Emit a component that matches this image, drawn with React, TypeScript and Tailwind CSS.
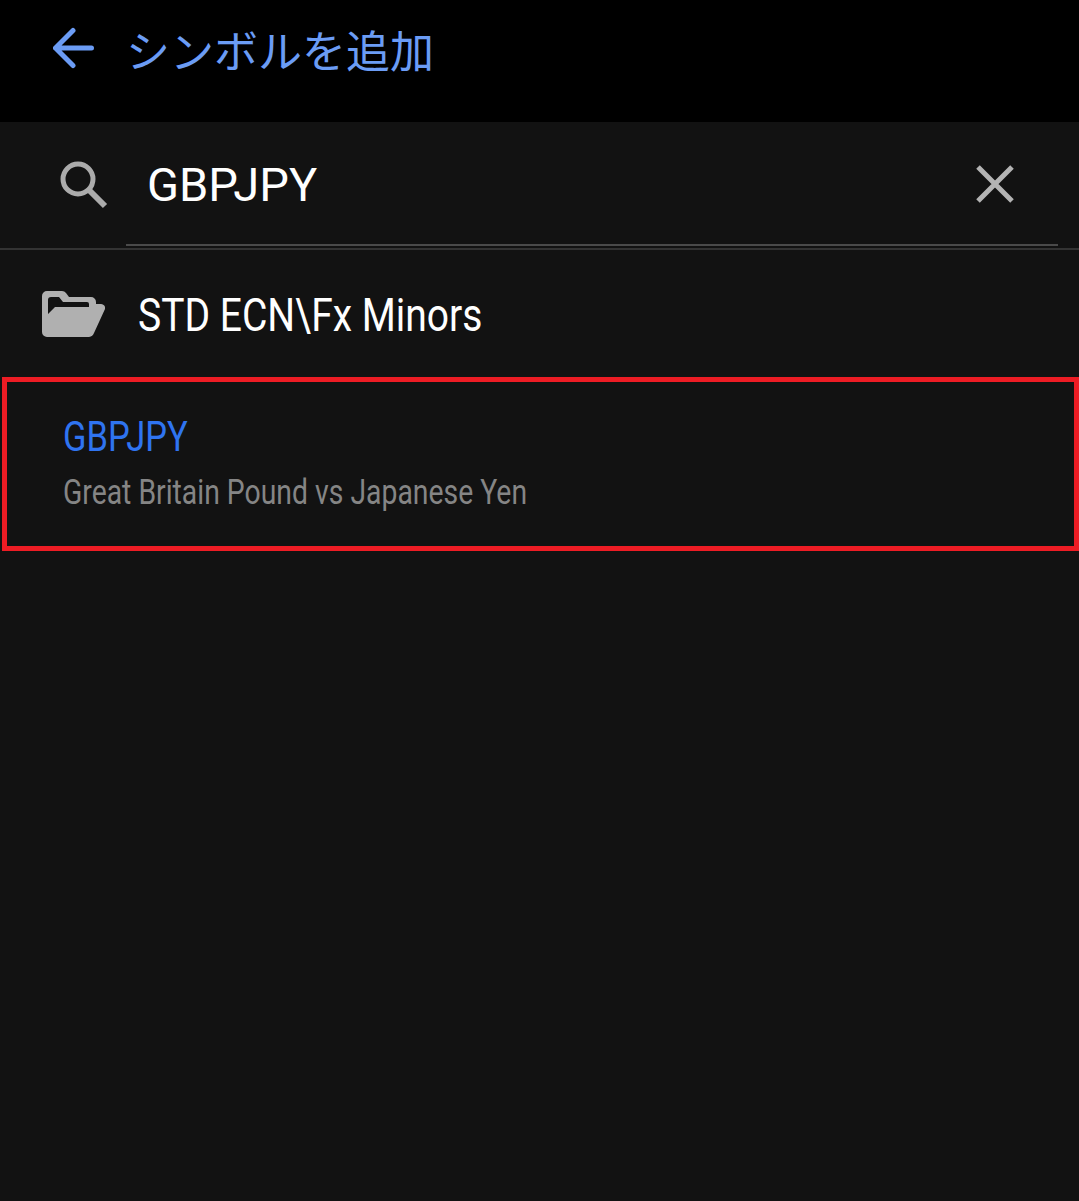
export default function App() {
  return (
    <div className="w-[1079px] h-[1201px] bg-[#121212] overflow-hidden font-['Roboto',sans-serif]">
      {/* Header */}
      <header className="h-[122px] bg-black flex items-start pl-[53px] pt-[24px]">
        <svg width="41" height="48" viewBox="0 0 41 48" className="text-[#6b9cf5] shrink-0">
          <path d="M2.500 24h36M20 6.500L2.500 24 20 41.500" fill="none" stroke="currentColor" strokeWidth="5" strokeLinecap="round" strokeLinejoin="round" />
        </svg>
        <h1 className="ml-[32px] -mt-[2px] text-[44px] leading-[54px] text-[#6b9cf5] font-['Noto_Sans_CJK_JP',sans-serif] font-normal whitespace-nowrap">
          シンボルを追加
        </h1>
      </header>

      {/* Search */}
      <div className="h-[128px] border-b-2 border-[#333] flex items-start">
        <svg width="48" height="48" viewBox="0 0 48 48" className="ml-[60px] mt-[39px] shrink-0">
          <circle cx="18" cy="18" r="15" fill="none" stroke="#ababab" strokeWidth="5" />
          <path d="M29 29l16 16" stroke="#ababab" strokeWidth="6" />
        </svg>
        <div className="ml-[18px] w-[932px] h-[124px] border-b-2 border-[#4a4a4a] flex items-start justify-between">
          <span className="ml-[21px] mt-[35px] text-[47px] leading-[56px] text-white">GBPJPY</span>
          <svg width="40" height="40" viewBox="0 0 40 40" className="mr-[43px] mt-[42px]">
            <path d="M3 3l34 34M37 3L3 37" stroke="#b4b4b4" strokeWidth="5" />
          </svg>
        </div>
      </div>

      {/* Folder */}
      <div className="h-[127px] flex items-center pl-[42px]">
        <svg width="63" height="46" viewBox="0 0 63 46" className="shrink-0 mt-[1px]">
          <path
            fillRule="evenodd"
            fill="#b0b0b0"
            d="M5 0H20a5 5 0 0 1 4 2L27 6H49a5 5 0 0 1 5 5V13H59a4 4 0 0 1 4 5L52 42a6 6 0 0 1-5 4H5a5 5 0 0 1-5-5V5a5 5 0 0 1 5-5zM9 6a3 3 0 0 0-3 3V23L13 16H47V13a2 2 0 0 0-2-2H21L17 6z"
          />
        </svg>
        <span className="ml-[33px] mt-[2px] text-[47px] leading-[54px] text-white scale-x-[0.83] origin-left whitespace-nowrap">
          {"STD ECN\\Fx Minors"}
        </span>
      </div>

      {/* Highlighted symbol */}
      <div className="ml-[2px] w-[1077px] h-[174px] border-[5px] border-[#ed1c24] pl-[56px] pt-[30px]">
        <div className="text-[42px] leading-[50px] text-[#2f74f0] scale-x-[0.82] origin-left whitespace-nowrap">GBPJPY</div>
        <div className="mt-[9px] text-[35px] leading-[44px] text-[#858585] scale-x-[0.81] origin-left whitespace-nowrap">
          Great Britain Pound vs Japanese Yen
        </div>
      </div>
    </div>
  );
}
